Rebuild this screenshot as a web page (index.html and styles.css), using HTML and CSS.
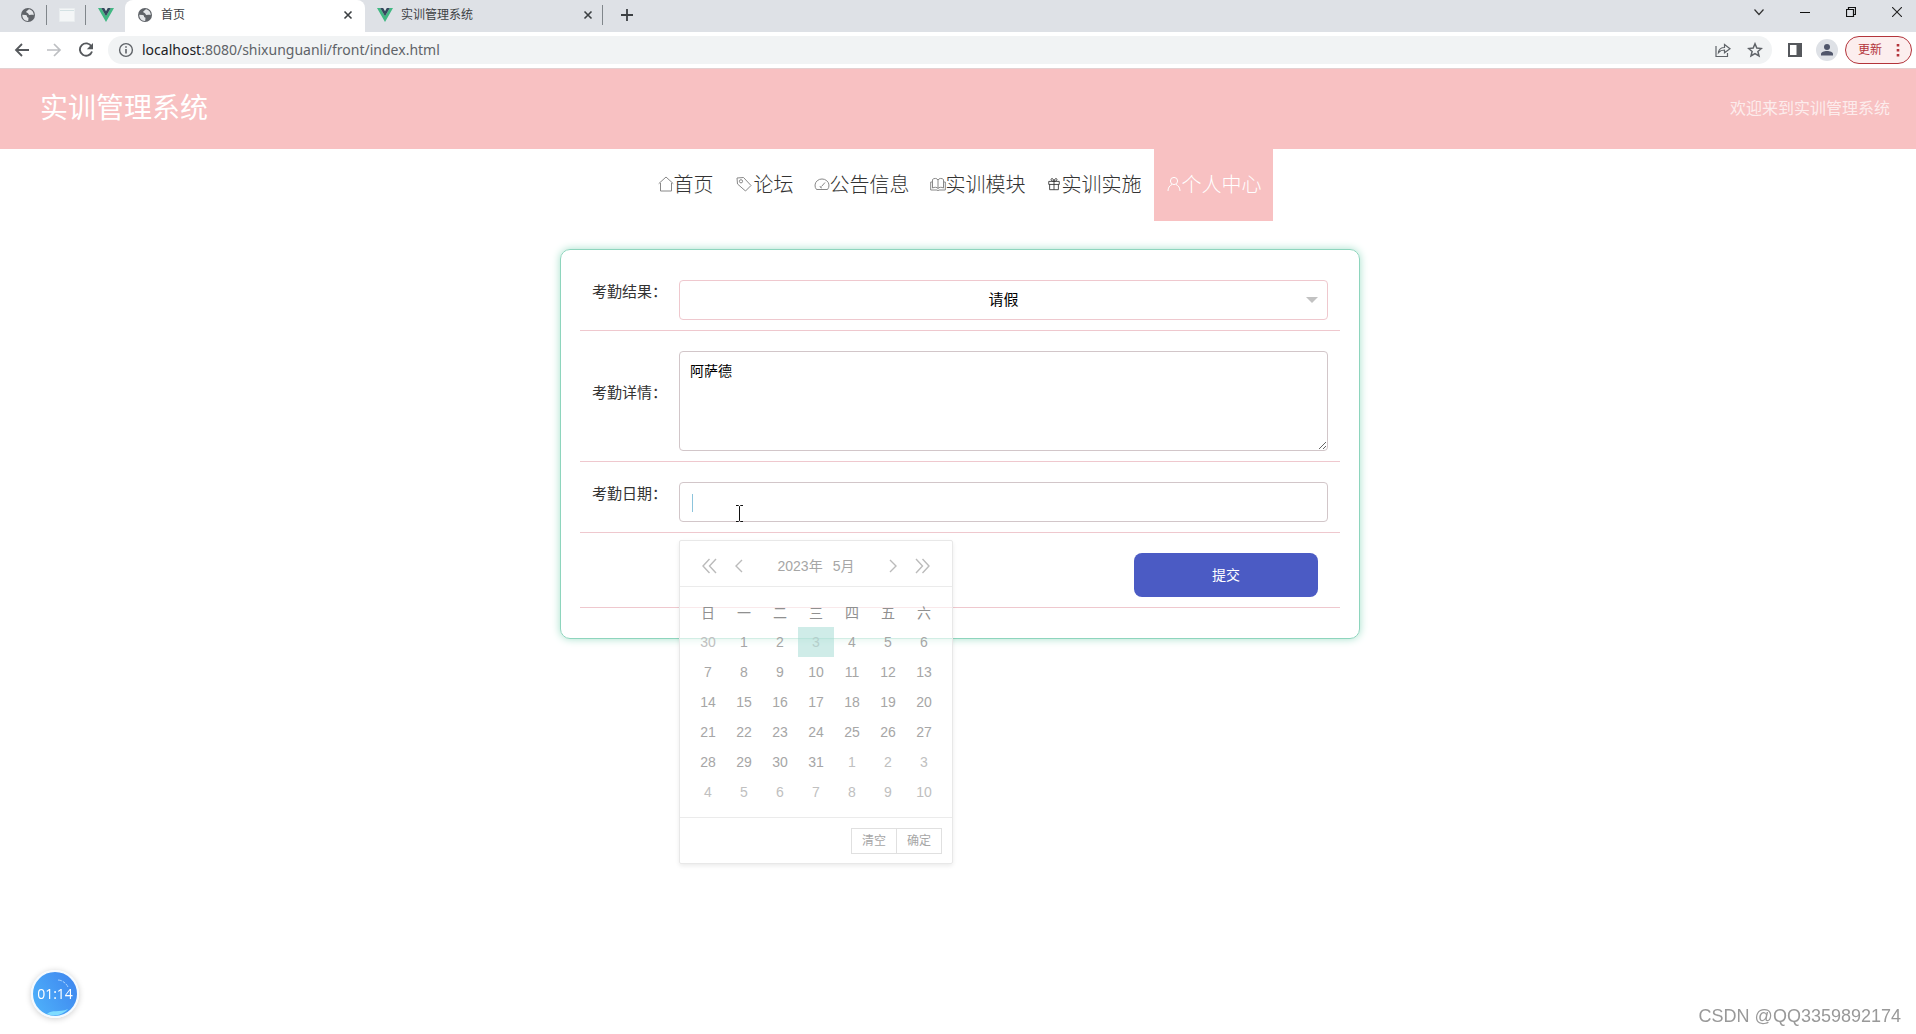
FILE: index.html
```html
<!DOCTYPE html>
<html lang="zh-CN">
<head>
<meta charset="utf-8">
<title>首页</title>
<link rel="stylesheet" href="styles.css">
</head>
<body>
<svg class="defs" width="0" height="0" aria-hidden="true">
  <symbol id="globe" viewBox="0 0 16 16"><circle cx="8" cy="8" r="7" fill="#5f6368"/><path d="M2.300 7.800l3.200.2c1.500.2 1.800 1 1.500 2l1.500.8-.3 3.200c-3.500.2-6-2.600-5.900-6.200zM9.500 2.300c-1.500 0-1.700 1.200-2.700 1.700-1 .6-.6 1.700.4 1.800 1.400.2 1 1.900 2.300 2.200 1.300.2 2.300-.6 4.200.3.200-2.800-1.400-5.200-4.200-6z" fill="#e3e5e8"/></symbol>
  <symbol id="vue" viewBox="0 0 16 14"><path d="M0 0h3.200L8 8.300 12.800 0H16L8 14z" fill="#41b883"/><path d="M3.200 0h3L8 3.200 9.800 0h3L8 8.300z" fill="#35495e"/></symbol>
  <symbol id="cross" viewBox="0 0 10 10"><path d="M1.500 1.500l7 7m0-7l-7 7" fill="none" stroke="#3c4043" stroke-width="1.600"/></symbol>
</svg>

<div class="browser">
  <div class="tabs">
    <a class="pin" href="#"><svg width="16" height="16"><use href="#globe"/></svg></a>
    <a class="pin" href="#"><svg width="16" height="14" viewBox="0 0 16 14"><path d="M.5.5h15v13H.5z" fill="#f4f6f7" stroke="#e9edef"/><path d="M1 2.500h14" stroke="#d3e1e3"/></svg></a>
    <a class="pin pin-last" href="#"><svg width="16" height="14"><use href="#vue"/></svg></a>
    <div class="tab tab-active">
      <svg width="16" height="16"><use href="#globe"/></svg><span class="tab-title">首页</span>
      <button class="tab-close" aria-label="关闭"><svg width="10" height="10"><use href="#cross"/></svg></button>
    </div>
    <div class="tab">
      <svg width="16" height="14"><use href="#vue"/></svg><span class="tab-title">实训管理系统</span>
      <button class="tab-close" aria-label="关闭"><svg width="10" height="10"><use href="#cross"/></svg></button>
    </div>
    <button class="new-tab" aria-label="新标签页"><svg width="12" height="12" viewBox="0 0 12 12"><path d="M6 0v12M0 6h12" stroke="#3c4043" stroke-width="1.800"/></svg></button>
    <div class="window-buttons">
      <button aria-label="搜索标签页"><svg width="10" height="10" viewBox="0 0 10 10"><path d="M.5 2.500L5 7.500l4.500-5" fill="none" stroke="#333" stroke-width="1.200"/></svg></button>
      <button aria-label="最小化"><svg width="10" height="10" viewBox="0 0 10 10"><path d="M0 5.500h10" stroke="#111"/></svg></button>
      <button aria-label="还原"><svg width="10" height="10" viewBox="0 0 10 10"><path d="M.5 2.500h7v7h-7zM2.500 2.500v-2h7v7h-2" fill="none" stroke="#111" stroke-width="1.200"/></svg></button>
      <button aria-label="关闭窗口"><svg width="10" height="10" viewBox="0 0 10 10"><path d="M0 0l10 10M10 0L0 10" stroke="#222" stroke-width="1.100"/></svg></button>
    </div>
  </div>
  <div class="toolbar">
    <button class="tool" aria-label="后退"><svg width="16" height="16" viewBox="0 0 16 16"><path d="M15 8H2M8 2L2 8l6 6" fill="none" stroke="#55585c" stroke-width="1.800"/></svg></button>
    <button class="tool" aria-label="前进"><svg width="16" height="16" viewBox="0 0 16 16"><path d="M1 8h13M8 2l6 6-6 6" fill="none" stroke="#bdbfc2" stroke-width="1.700"/></svg></button>
    <button class="tool" aria-label="刷新"><svg width="16" height="16" viewBox="0 0 16 16"><path d="M13.500 4.500A6.200 6.200 0 1 0 14 9.500" fill="none" stroke="#55585c" stroke-width="1.900"/><path d="M15 1v6.200H8.800z" fill="#55585c"/></svg></button>
    <div class="address">
      <svg width="16" height="16" viewBox="0 0 16 16"><circle cx="8" cy="8" r="6.400" fill="none" stroke="#5f6368" stroke-width="1.400"/><path d="M8 7v4.500M8 4.200v1.600" stroke="#5f6368" stroke-width="1.600"/></svg>
      <span class="url"><b>localhost</b>:8080/shixunguanli/front/index.html</span>
      <button aria-label="分享"><svg width="16" height="16" viewBox="0 0 16 16"><path d="M1 4v10.500h11.500V11M3.500 10.500c.5-3.500 3-5 6-5V2.500l5.500 4.300-5.500 4V8c-2.500 0-4.500.700-6 2.500z" fill="none" stroke="#5f6368" stroke-width="1.200"/></svg></button>
      <button aria-label="收藏"><svg width="16" height="16" viewBox="0 0 16 16"><path d="M8 1.800l1.800 4.300 4.600.4-3.500 3 1.100 4.500-4-2.400-4 2.400 1.100-4.500-3.500-3 4.600-.4z" fill="none" stroke="#5f6368" stroke-width="1.500"/></svg></button>
    </div>
    <button class="side-panel" aria-label="侧边栏"><svg width="14" height="14" viewBox="0 0 14 14"><path d="M1 1h12v12H1z" fill="none" stroke="#55585c" stroke-width="2"/><path d="M8.500 1H13v12H8.500z" fill="#55585c"/></svg></button>
    <button class="avatar" aria-label="用户"><svg width="14" height="14" viewBox="0 0 14 14"><circle cx="7" cy="4" r="3" fill="#50566b"/><path d="M1 12.500V11c0-2 3-3 6-3s6 1 6 3v1.500z" fill="#50566b"/></svg></button>
    <button class="update"><span>更新</span><svg width="4" height="14" viewBox="0 0 4 14"><path d="M.7 1h2.600v2.400H.7zM.7 6h2.600v2.400H.7zM.7 11h2.600v2.400H.7z" fill="#b3343b"/></svg></button>
  </div>
</div>

<header class="header">
  <h1>实训管理系统</h1>
  <span>欢迎来到实训管理系统</span>
</header>

<nav class="nav">
  <a href="#"><svg class="icon" viewBox="0 0 16 16"><path d="M.7 7.700L8 1l7.300 6.700M2.500 7v8h11V7"/></svg>首页</a>
  <a href="#"><svg class="icon icon-wide" viewBox="0 0 16 16"><path d="M1 2l6.500-.5 7.500 8-5.500 5.500L1.500 8z"/><circle cx="5" cy="5.300" r="1.600"/></svg>论坛</a>
  <a href="#"><svg class="icon" viewBox="0 0 16 16"><path d="M2.500 13.500A7 6.500 0 1 1 13.500 13.500zM7.500 10.500L11 6.500M6.500 10a1 1 0 0 0 1.500 1.500"/></svg>公告信息</a>
  <a href="#"><svg class="icon" viewBox="0 0 16 16"><path d="M2.500 12V3.500C4 2 7 2 8 4c1-2 4-2 5.500-.5V12c-2-1-4.500-1-5.500.5C7 11 4.500 11 2.500 12zM8 4v8.500M2.500 6H.7v8H7l1 .7 1-.7h6.300V6h-1.800"/></svg>实训模块</a>
  <a href="#"><svg class="icon icon-dark icon-gift" viewBox="0 0 16 16"><path d="M2 5h12v3.500H2zM3 8.500v6h10v-6M8 5v9.500M8 5C5 5 4 3 5 2s3 1 3 3c0-2 2-4 3-3s0 3-3 3"/></svg>实训实施</a>
  <a href="#" class="current"><svg class="icon" viewBox="0 0 16 16"><circle cx="8" cy="5" r="3.600"/><path d="M2 15c0-3 1.500-5.500 4-6.500M14 15c0-3-1.500-5.500-4-6.500"/></svg>个人中心</a>
</nav>

<main class="content">
  <form class="card">
    <div class="row">
      <label for="result">考勤结果：</label>
      <div class="field select">
        <select id="result"><option>请假</option></select>
      </div>
    </div>
    <div class="row">
      <label for="detail">考勤详情：</label>
      <div class="field"><textarea id="detail">阿萨德</textarea></div>
    </div>
    <div class="row">
      <label for="date">考勤日期：</label>
      <div class="field">
        <input id="date" type="text">
        <i class="caret"></i>
        <svg class="pointer" width="9" height="17" viewBox="0 0 9 17"><path d="M1 .5h2.500l1 1 1-1H8M4.500 1.500v14M1 16.500h2.500l1-1 1 1H8" fill="none" stroke="#111"/></svg>
        <div class="calendar">
          <div class="calendar-head">
            <button type="button" aria-label="上一年"><svg width="18" height="18" viewBox="0 0 18 18"><path d="M9.500 2L3 9l6.500 7M16 2L9.500 9l6.500 7"/></svg></button>
            <button type="button" aria-label="上一月"><svg width="18" height="18" viewBox="0 0 18 18"><path d="M12 3L6 9l6 6"/></svg></button>
            <span class="month"><span>2023年</span><span>5月</span></span>
            <button type="button" aria-label="下一月"><svg width="18" height="18" viewBox="0 0 18 18"><path d="M6 3l6 6-6 6"/></svg></button>
            <button type="button" aria-label="下一年"><svg width="18" height="18" viewBox="0 0 18 18"><path d="M2 2l6.500 7L2 16M8.500 2L15 9l-6.500 7"/></svg></button>
          </div>
          <table>
            <thead><tr><th>日</th><th>一</th><th>二</th><th>三</th><th>四</th><th>五</th><th>六</th></tr></thead>
            <tbody>
              <tr><td class="out">30</td><td>1</td><td>2</td><td class="today">3</td><td>4</td><td>5</td><td>6</td></tr>
              <tr><td>7</td><td>8</td><td>9</td><td>10</td><td>11</td><td>12</td><td>13</td></tr>
              <tr><td>14</td><td>15</td><td>16</td><td>17</td><td>18</td><td>19</td><td>20</td></tr>
              <tr><td>21</td><td>22</td><td>23</td><td>24</td><td>25</td><td>26</td><td>27</td></tr>
              <tr><td>28</td><td>29</td><td>30</td><td>31</td><td class="out">1</td><td class="out">2</td><td class="out">3</td></tr>
              <tr><td class="out">4</td><td class="out">5</td><td class="out">6</td><td class="out">7</td><td class="out">8</td><td class="out">9</td><td class="out">10</td></tr>
            </tbody>
          </table>
          <div class="calendar-foot"><button type="button">清空</button><button type="button">确定</button></div>
        </div>
      </div>
    </div>
    <div class="row row-submit"><button class="submit" type="button">提交</button></div>
  </form>
</main>

<div class="timer"><svg width="44" height="44" viewBox="0 0 44 44"><path d="M25 8c4 0 8 3 10 7" fill="none" stroke="#a8d2ff" stroke-dasharray="4 1 3 1"/><path d="M14 42c5-5 12-1 21-5-5 6-14 8-21 5z" fill="#7fdcff"/></svg><span>01:14</span></div>
<div class="watermark">CSDN @QQ3359892174</div>
</body>
</html>
```
FILE: styles.css
```css
* { box-sizing: border-box; }
body {
  margin: 0;
  min-height: 100vh;
  background: #fff;
  color: #333;
  font: 14px/20px "Liberation Sans", "Noto Sans CJK SC", sans-serif;
}
button { padding: 0; border: 0; background: none; font: inherit; color: inherit; }
a { color: inherit; text-decoration: none; }
svg { display: block; flex: none; }
.defs { position: absolute; }

/* Browser frame */
.tabs { display: flex; height: 32px; background: #dee1e6; padding-left: 8px; }
.pin { display: flex; align-items: center; justify-content: center; width: 39px; position: relative; }
.pin:not(.pin-last)::after, .tab:not(.tab-active)::after {
  content: ""; position: absolute; right: 0; top: 5px; width: 1px; height: 20px; background: #80868b;
}
.pin { height: 30px; }
.pin-last { width: 39px; }
.tab { display: flex; align-items: center; gap: 8px; width: 238px; height: 32px; padding: 0 10px 2px 12px; position: relative; font-size: 12px; color: #3c4043; }
.tab-active { width: 240px; padding: 0 12px 2px; background: #fff; border-radius: 8px 8px 0 0; }
.tab-title { flex: 1; }
.new-tab { width: 47px; height: 30px; display: flex; align-items: center; justify-content: center; }
.window-buttons { display: flex; margin-left: auto; height: 24px; }
.window-buttons button { width: 46px; display: flex; align-items: center; justify-content: center; }
.window-buttons button:last-child { width: 38px; margin-left: 4px; }
.toolbar { display: flex; align-items: center; height: 37px; padding: 0 4px 0 6px; background: #fff; border-bottom: 1px solid #e3d0d1; }
.tool { display: flex; justify-content: center; width: 32px; }
.address { flex: 1; display: flex; align-items: center; height: 28px; margin-left: 6px; padding: 0 9px 0 10px; border-radius: 14px; background: #f1f3f4; }
.url { flex: 1; margin-left: 8px; font: 14px/20px "Noto Sans", "Open Sans", sans-serif; color: #5f6368; }
.url b { font-weight: 400; color: #202124; }
.address button + button { margin-left: 16px; }
.side-panel { margin: 0 14px 0 16px; }
.avatar { display: flex; align-items: center; justify-content: center; width: 22px; height: 22px; border-radius: 50%; background: #dee1e6; margin-right: 7px; }
.update { display: flex; align-items: center; justify-content: space-between; width: 67px; height: 28px; padding: 0 11px 0 12px; border: 1px solid #b3343b; border-radius: 14px; background: #fceeee; color: #b3343b; font-size: 12px; }

/* Site header and menu */
.header { display: flex; align-items: center; justify-content: space-between; height: 80px; padding: 0 26px 0 40px; background: #f8c1c2; color: #fff; }
.header h1 { margin: 0; font-size: 28px; line-height: 40px; font-weight: 400; }
.header span { font-size: 16px; opacity: .7; }
.nav { display: flex; justify-content: center; padding-left: 4px; font-family: "Noto Sans CJK SC", sans-serif; font-size: 20px; line-height: 70px; font-weight: 300; }
.nav a { display: flex; align-items: center; height: 72px; padding: 0 10px 2px; }
.nav .current { margin-left: 2px; padding: 0 11px 2px 12px; background: #f8c1c2; color: #fff; }
.icon { width: 16px; height: 16px; fill: none; stroke: #888; stroke-width: 1; }
.icon-wide { width: 20px; }
.icon-dark { stroke: #333; }
.icon-gift { height: 14px; }
.current .icon { stroke: #fff; }

/* Form */
.content { padding: 28px 0 0 4px; }
.card { width: 800px; max-width: 100%; margin: 0 auto; padding: 20px 19px; border: 1px solid #8ed5bd; border-radius: 10px; box-shadow: 0 0 8px #a5e0cb; }
.row { display: flex; align-items: center; padding: 10px 12px; margin-bottom: 10px; border-bottom: 1px solid #efc8ce; }
.row label { width: 87px; padding-bottom: 16px; font-size: 15px; white-space: nowrap; }
.field { flex: 1; position: relative; }
.field select, .field input, .field textarea {
  display: block; width: 100%; height: 40px; border: 1px solid #d2c6c9; border-radius: 4px;
  background: #fff; color: #000; font: inherit; padding: 0 10px; outline: 0;
}
.field select { appearance: none; border-color: #efc8ce; font-size: 15px; text-align-last: center; }
.select::after { content: ""; position: absolute; right: 10px; top: 17px; border: 6px solid transparent; border-top-color: #c2c2c2; }
.field textarea { height: 100px; padding: 9px 10px; resize: vertical; }
.caret { position: absolute; left: 13px; top: 12px; width: 1px; height: 18px; background: #8cc4dc; }
.pointer { position: absolute; left: 56px; top: 23px; }
.row-submit { justify-content: flex-end; padding-right: 22px; }
.submit { width: 184px; height: 44px; border-radius: 8px; background: #4b5bc4; color: #fff; }

/* Date picker, part way through its fade-in */
.calendar { position: absolute; z-index: 2; left: 0; top: 58px; width: 274px; border: 1px solid #e8e8e8; border-radius: 2px; background: rgba(255,255,255,.6); box-shadow: 0 2px 4px rgba(0,0,0,.08); color: #a6a6a6; }
.calendar-head { display: flex; align-items: center; height: 46px; padding: 5px 20px 0; border-bottom: 1px solid #ebebeb; }
.calendar-head button + button, .month + button + button { margin-left: 12px; }
.calendar-head svg { fill: none; stroke: #bbb; stroke-width: 1.400; }
.month { flex: 1; display: flex; justify-content: center; gap: 10px; }
.calendar table { margin: 10px 10px; border-collapse: collapse; table-layout: fixed; width: 252px; }
.calendar th, .calendar td { height: 30px; padding: 0; font-weight: 400; text-align: center; }
.calendar th { padding-top: 2px; color: #909090; }
.calendar .out { color: #c0c0c0; }
.calendar .today { background: rgba(160,218,210,.5); color: #b5cfcb; }
.calendar-foot { display: flex; justify-content: flex-end; height: 46px; padding: 10px; border-top: 1px solid #ebebeb; }
.calendar-foot button { width: 46px; height: 26px; border: 1px solid #e0e0e0; font-size: 12px; }
.calendar-foot button + button { margin-left: -1px; }

/* Overlays */
.timer { position: fixed; left: 31px; bottom: 16px; width: 48px; height: 48px; border: 2px solid #f4faff; border-radius: 50%; background: linear-gradient(60deg, #4fb4fb, #3d83ee); box-shadow: 0 1px 6px rgba(0,0,0,.2); color: #fff; }
.timer span { position: absolute; left: 0; right: 0; top: 12px; text-align: center; font-family: "Open Sans", sans-serif; }
.watermark { position: fixed; right: 15px; bottom: 8px; font-size: 18px; color: #999; }
```
